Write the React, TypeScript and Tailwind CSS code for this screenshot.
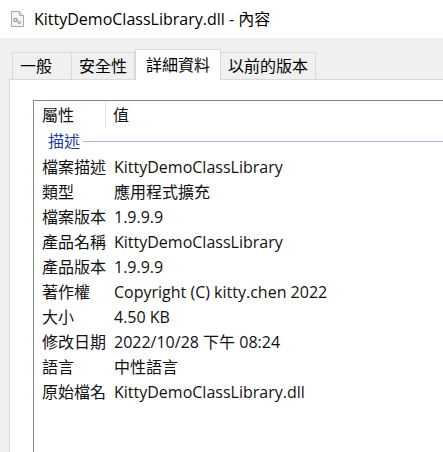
import { ReactNode } from 'react';

const rows: [string, string][] = [
  ['檔案描述', 'KittyDemoClassLibrary'],
  ['類型', '應用程式擴充'],
  ['檔案版本', '1.9.9.9'],
  ['產品名稱', 'KittyDemoClassLibrary'],
  ['產品版本', '1.9.9.9'],
  ['著作權', 'Copyright (C) kitty.chen 2022'],
  ['大小', '4.50 KB'],
  ['修改日期', '2022/10/28 下午 08:24'],
  ['語言', '中性語言'],
  ['原始檔名', 'KittyDemoClassLibrary.dll'],
];

const tabs = ['一般', '安全性', '詳細資料', '以前的版本'];

function DllIcon() {
  return (
    <svg width="13" height="16" viewBox="0 0 13 16">
      <path d="M0.5 0.5h8l4 4v11h-12z" fill="#f4f4f4" stroke="#a8a8a8" />
      <path d="M8.5 0.5v4h4" fill="#e0e0e0" stroke="#a8a8a8" />
      <circle cx="4.5" cy="9" r="2.3" fill="#9a9a9a" />
      <circle cx="4.5" cy="9" r="0.9" fill="#f4f4f4" />
      <circle cx="8.3" cy="11.3" r="1.9" fill="#b0b0b0" />
      <circle cx="8.3" cy="11.3" r="0.7" fill="#f4f4f4" />
    </svg>
  );
}

function Tab({ label, active }: { label: string; active?: boolean }): ReactNode {
  return active ? (
    <div className="relative z-10 -mb-px h-[31px] px-[10px] flex items-center border border-b-0 border-[#d9d9d9] bg-white text-black">
      {label}
    </div>
  ) : (
    <div className="h-[27px] min-w-[60px] px-[7px] flex items-center border border-b-0 border-[#d9d9d9] bg-[#f0f0f0] text-black -ml-px first:ml-0">
      {label}
    </div>
  );
}

export default function App() {
  return (
    <div
      className="w-[443px] h-[452px] overflow-hidden bg-[#f0f0f0] flex flex-col text-[16px] text-[#111]"
      style={{ fontFamily: '"Open Sans","Noto Sans CJK TC",sans-serif' }}
    >
      {/* Title bar */}
      <div className="h-[38px] shrink-0 bg-white flex items-center pl-[11px]">
        <DllIcon />
        <span className="ml-[10px] text-black">KittyDemoClassLibrary.dll - 內容</span>
      </div>

      <div className="flex-1 flex flex-col pl-[9px] pt-[11px]">
        {/* Tabs */}
        <div className="flex items-end pl-[3px]">
          {tabs.map((t) => (
            <Tab key={t} label={t} active={t === '詳細資料'} />
          ))}
        </div>

        {/* Panel */}
        <div className="flex-1 border-t border-l border-[#d9d9d9] bg-white pl-[23px] pt-[20px]">
          <div className="h-full border-t border-l border-[#828790] bg-white">
            <div className="flex h-[27px] items-center">
              <div className="w-[72px] h-full flex items-center pl-[8px] border-r border-[#e5e5e5]">屬性</div>
              <div className="pl-[7px]">值</div>
            </div>
            <div className="flex h-[26px] items-center pl-[14px]">
              <span className="text-[#1e3c9e]">描述</span>
              <div className="ml-[3px] flex-1 h-px bg-[#a9bbe6]" />
            </div>
            {rows.map(([k, v]) => (
              <div key={k} className="flex h-[25px] items-center">
                <div className="w-[80px] pl-[8px] shrink-0 whitespace-nowrap">{k}</div>
                <div className="whitespace-nowrap">{v}</div>
              </div>
            ))}
          </div>
        </div>
      </div>
    </div>
  );
}
